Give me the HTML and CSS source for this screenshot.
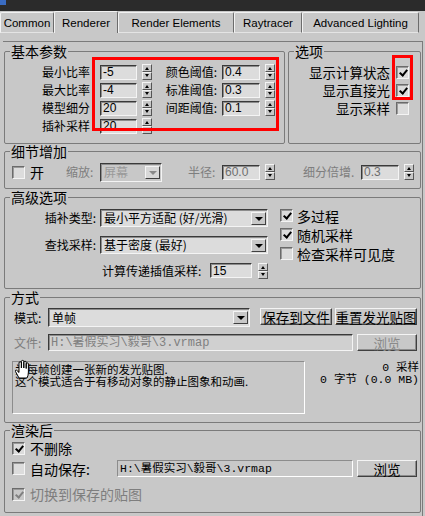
FILE: index.html
```html
<!DOCTYPE html>
<html>
<head>
  <meta charset="utf-8">
  <meta name="viewport" content="width=device-width, initial-scale=1.0">
  <title>Render Setup - 发光贴图</title>
  <link rel="stylesheet" href="styles.css">
</head>
<body>

  <div class="topbar"><span class="app-icon"></span></div>

  <!-- Tabs -->
  <div class="tabs">
    <div class="tab tab-common">Common</div>
    <div class="tab tab-renderer active">Renderer</div>
    <div class="tab tab-elements">Render Elements</div>
    <div class="tab tab-raytracer">Raytracer</div>
    <div class="tab tab-lighting">Advanced Lighting</div>
  </div>

  <div class="panel">

    <!-- 基本参数 / 选项 -->
    <div class="group-row">
      <fieldset class="group basic">
        <legend>基本参数</legend>
        <div class="basic-grid">
          <span class="lbl">最小比率</span>
          <span class="field">-5</span>
          <span class="spin"><b></b><b></b></span>
          <span class="lbl">颜色阈值:</span>
          <span class="field">0.4</span>
          <span class="spin"><b></b><b></b></span>

          <span class="lbl">最大比率</span>
          <span class="field">-4</span>
          <span class="spin"><b></b><b></b></span>
          <span class="lbl">标准阈值:</span>
          <span class="field">0.3</span>
          <span class="spin"><b></b><b></b></span>

          <span class="lbl">模型细分</span>
          <span class="field">20</span>
          <span class="spin"><b></b><b></b></span>
          <span class="lbl">间距阈值:</span>
          <span class="field">0.1</span>
          <span class="spin"><b></b><b></b></span>

          <span class="lbl">插补采样</span>
          <span class="field">20</span>
          <span class="spin"><b></b><b></b></span>
        </div>
      </fieldset>

      <fieldset class="group options">
        <legend>选项</legend>
        <div class="opt-list">
          <div class="opt-row"><span>显示计算状态</span><span class="chk on"></span></div>
          <div class="opt-row"><span>显示直接光</span><span class="chk on"></span></div>
          <div class="opt-row"><span>显示采样</span><span class="chk"></span></div>
        </div>
      </fieldset>
    </div>

    <!-- 细节增加 -->
    <fieldset class="group detail">
      <legend>细节增加</legend>
      <div class="detail-row">
        <span class="chk"></span>
        <span class="big detail-on">开</span>
        <span class="dim detail-zoom">缩放:</span>
        <span class="combo combo-screen disabled"><span class="combo-text">屏幕</span><span class="combo-btn"></span></span>
        <span class="dim detail-radius">半径:</span>
        <span class="field field-radius dim-text">60.0</span>
        <span class="spin"><b></b><b></b></span>
        <span class="dim detail-mult">细分倍增.</span>
        <span class="field field-mult dim-text">0.3</span>
        <span class="spin"><b></b><b></b></span>
      </div>
    </fieldset>

    <!-- 高级选项 -->
    <fieldset class="group advanced">
      <legend>高级选项</legend>
      <div class="adv-body">
        <div class="adv-left">
          <div class="adv-row">
            <span class="adv-lbl">插补类型:</span>
            <span class="combo combo-wide"><span class="combo-text">最小平方适配 (好/光滑)</span><span class="combo-btn"></span></span>
          </div>
          <div class="adv-row adv-row2">
            <span class="adv-lbl">查找采样:</span>
            <span class="combo combo-wide"><span class="combo-text">基于密度 (最好)</span><span class="combo-btn"></span></span>
          </div>
          <div class="adv-row adv-row3">
            <span class="adv-lbl3">计算传递插值采样:</span>
            <span class="field field-interp">15</span>
            <span class="spin"><b></b><b></b></span>
          </div>
        </div>
        <div class="adv-right">
          <div class="check-row"><span class="chk on"></span><span class="big">多过程</span></div>
          <div class="check-row"><span class="chk on"></span><span class="big">随机采样</span></div>
          <div class="check-row"><span class="chk"></span><span class="big">检查采样可见度</span></div>
        </div>
      </div>
    </fieldset>

    <!-- 方式 -->
    <fieldset class="group mode">
      <legend>方式</legend>
      <div class="mode-row">
        <span class="mode-lbl">模式:</span>
        <span class="combo combo-mode"><span class="combo-text">单帧</span><span class="combo-btn"></span></span>
        <span class="btn btn-save">保存到文件</span>
        <span class="btn btn-reset">重置发光贴图</span>
      </div>
      <div class="mode-row file-row">
        <span class="mode-lbl dim">文件:</span>
        <span class="path-field disabled">H:\暑假实习\毅哥\3.vrmap</span>
        <span class="btn btn-browse disabled">浏览</span>
      </div>
      <div class="mode-row info-row">
        <div class="info-box">
          <div>为每帧创建一张新的发光贴图.</div>
          <div>这个模式适合于有移动对象的静止图象和动画.</div>
          <svg class="cursor" width="20" height="20" viewBox="0 0 20 20">
            <path d="M6 19 L2.5 12.5 Q2 10.8 3.6 11.2 L6 13.5 V4 Q6 2.7 7.2 2.7 Q8.4 2.7 8.4 4 V9 V2.6 Q8.4 1.4 9.6 1.4 Q10.8 1.4 10.8 2.6 V9 V3.4 Q10.8 2.2 12 2.2 Q13.2 2.2 13.2 3.4 V9.5 V5 Q13.2 3.9 14.3 3.9 Q15.4 3.9 15.4 5 V13 Q15.4 16.5 14 19 Z" fill="#fff" stroke="#000" stroke-width="1"/>
          </svg>
        </div>
        <div class="info-stats">
          <div>0 采样</div>
          <div>0 字节 (0.0 MB)</div>
        </div>
      </div>
    </fieldset>

    <!-- 渲染后 -->
    <fieldset class="group after">
      <legend>渲染后</legend>
      <div class="after-row">
        <span class="chk on"></span>
        <span class="big after-lbl">不删除</span>
      </div>
      <div class="after-row autosave-row">
        <span class="chk"></span>
        <span class="big after-lbl autosave-lbl">自动保存:</span>
        <span class="path-field autosave-field">H:\暑假实习\毅哥\3.vrmap</span>
        <span class="btn btn-browse">浏览</span>
      </div>
      <div class="after-row switch-row">
        <span class="chk on disabled"></span>
        <span class="big after-lbl dim">切换到保存的贴图</span>
      </div>
    </fieldset>

  </div>

  <!-- red annotation boxes -->
  <div class="mark mark-basic"></div>
  <div class="mark mark-options"></div>

</body>
</html>
```

FILE: styles.css
```css
* {
  box-sizing: border-box;
  margin: 0;
  padding: 0;
}

body {
  width: 425px;
  height: 516px;
  overflow: hidden;
  position: relative;
  background: #c8c8c8;
  color: #000;
  font-family: "Noto Sans CJK SC", "Liberation Sans", sans-serif;
  font-size: 12px;
  line-height: 14px;
}

.topbar {
  height: 11px;
  background: #2b2b2b;
  display: flex;
}

.app-icon {
  width: 6px;
  height: 5px;
  background: #3a6cc2;
}

/* Tabs */
.tabs {
  display: flex;
  align-items: flex-end;
  height: 22px;
}

.tab {
  height: 21px;
  display: flex;
  align-items: center;
  justify-content: center;
  border: 1px solid;
  border-color: #f2f2f2 #6c6c6c #e4e4e4 #f2f2f2;
  border-radius: 2px 2px 0 0;
  font-family: "Liberation Sans", Arial, sans-serif;
  font-size: 11.5px;
}

.tab.active {
  height: 22px;
  border-bottom: none;
}

.tab-common { width: 54px; }
.tab-renderer { width: 64px; }
.tab-elements { width: 116px; }
.tab-raytracer { width: 68px; }
.tab-lighting { width: 117px; }

/* Rollout panel */
.panel {
  margin: 8px 0 0 3px;
  width: 420px;
  height: 475px;
  border-top: 1px solid #7b7b7b;
  border-right: 1px solid #7b7b7b;
  padding: 1px 0 0 1px;
}

.group {
  border: 1px solid #7b7b7b;
  border-radius: 2px;
  min-inline-size: 0;
  width: 417px;
}

.group legend {
  margin-left: 5px;
  padding: 0 1px;
  font-size: 14px;
  line-height: 14px;
}

.group-row {
  display: flex;
  gap: 3px;
  margin-top: 1px;
}

.big {
  font-size: 14px;
}

.dim {
  color: #7e7e7e;
}

/* generic controls */
.field {
  height: 15px;
  display: flex;
  align-items: center;
  padding-left: 2px;
  border: 1px solid;
  border-color: #3a3a3a #f4f4f4 #f4f4f4 #3a3a3a;
  box-shadow: inset 1px 1px #8c8c8c;
  background: #dcdcdc;
  font-family: "Liberation Sans", Arial, sans-serif;
  font-size: 12px;
}

.dim-text {
  color: #6e6e6e;
}

.spin {
  width: 10px;
  height: 16px;
  display: flex;
  flex-direction: column;
}

.spin b {
  flex: 1;
  position: relative;
  border: 1px solid;
  border-color: #f4f4f4 #555 #555 #f4f4f4;
  background: #c8c8c8;
}

.spin b::after {
  content: "";
  position: absolute;
  left: 2px;
  top: 2px;
  border-left: 2px solid transparent;
  border-right: 2px solid transparent;
  border-bottom: 3px solid #000;
}

.spin b:last-child::after {
  top: 1px;
  border-bottom: none;
  border-top: 3px solid #000;
}

.chk {
  flex: none;
  position: relative;
  width: 13px;
  height: 13px;
  border: 1px solid;
  border-color: #6b6b6b #f4f4f4 #f4f4f4 #6b6b6b;
  box-shadow: inset 1px 1px #9a9a9a;
  background: #dcdcdc;
}

.chk.on::after {
  content: "";
  position: absolute;
  left: 4px;
  top: 1px;
  width: 3px;
  height: 6px;
  border: solid #000;
  border-width: 0 2px 2px 0;
  transform: rotate(40deg);
}

.chk.disabled {
  background: #c8c8c8;
}

.chk.disabled::after {
  border-color: #808080;
}

.combo {
  display: flex;
  align-items: center;
  height: 18px;
  padding-left: 3px;
  border: 1px solid;
  border-color: #3a3a3a #f4f4f4 #f4f4f4 #3a3a3a;
  box-shadow: inset 1px 1px #8c8c8c;
  background: #dcdcdc;
}

.combo-text {
  flex: 1;
  white-space: nowrap;
}

.combo-btn {
  position: relative;
  width: 15px;
  height: 13px;
  margin-right: 1px;
  border: 1px solid;
  border-color: #f4f4f4 #404040 #404040 #f4f4f4;
  background: #c8c8c8;
}

.combo-btn::after {
  content: "";
  position: absolute;
  left: 3px;
  top: 4px;
  border-left: 4px solid transparent;
  border-right: 4px solid transparent;
  border-top: 4px solid #000;
}

.combo.disabled {
  background: #c8c8c8;
  color: #9a9a9a;
}

.combo.disabled .combo-btn {
  background: #d8d8d8;
}

.combo.disabled .combo-btn::after {
  border-top-color: #8a8a8a;
}

.btn {
  height: 17px;
  display: flex;
  align-items: center;
  justify-content: center;
  border: 1px solid;
  border-color: #f4f4f4 #404040 #404040 #f4f4f4;
  box-shadow: inset -1px -1px #8c8c8c;
  background: #c8c8c8;
  font-size: 13.5px;
  white-space: nowrap;
}

.btn.disabled {
  color: #8a8a8a;
}

.path-field {
  height: 17px;
  display: flex;
  align-items: center;
  padding-left: 2px;
  border: 1px solid;
  border-color: #8c8c8c #fff #fff #8c8c8c;
  font-family: "Liberation Mono", "Noto Sans CJK SC", monospace;
  font-size: 11.5px;
  white-space: nowrap;
}

.path-field.disabled {
  border-color: #3a3a3a #f4f4f4 #f4f4f4 #3a3a3a;
  box-shadow: inset 1px 1px #8c8c8c;
  background: #d0d0d0;
  color: #808080;
  font-size: 12px;
}

/* 基本参数 */
.group.basic {
  width: 281px;
  flex: none;
}

.basic-grid {
  display: grid;
  grid-template-columns: 90px 37px 10px 60px 38px 10px;
  grid-auto-rows: 18px;
  column-gap: 5px;
  align-items: center;
  padding: 5px 0 8px;
}

.lbl {
  text-align: right;
  white-space: nowrap;
}

.basic-grid .lbl:nth-child(6n+1) {
  padding-right: 5px;
}

/* 选项 */
.group.options {
  width: 133px;
  flex: none;
}

.opt-list {
  padding: 5px 11px 0 0;
}

.opt-row {
  height: 18px;
  display: flex;
  align-items: center;
  justify-content: flex-end;
  gap: 6px;
  font-size: 13.5px;
}

/* 细节增加 */
.detail-row {
  height: 18px;
  display: flex;
  align-items: center;
  margin: 5px 0 7px 7px;
}

.detail-on { margin-left: 5px; width: 14px; }
.detail-zoom { margin-left: 22px; width: 30px; }
.combo-screen { margin-left: 4px; width: 62px; height: 19px; }
.detail-radius { margin-left: 26px; width: 30px; }
.field-radius { margin-left: 4px; width: 38px; }
.detail-mult { margin-left: 28px; width: 54px; }
.field-mult { margin-left: 4px; width: 38px; }
.detail-row .spin { margin-left: 5px; }

/* 高级选项 */
.group.advanced {
  margin-top: 1px;
}

.adv-body {
  display: flex;
  align-items: flex-start;
  padding-bottom: 9px;
}

.adv-left {
  padding-top: 5px;
}

.adv-row {
  display: flex;
  align-items: center;
  height: 18px;
}

.adv-row2 { margin-top: 9px; }
.adv-row3 { margin-top: 8px; height: 17px; }

.adv-lbl {
  width: 91px;
  margin-right: 4px;
  text-align: right;
}

.combo-wide {
  width: 168px;
}

.adv-lbl3 {
  margin-left: 97px;
  width: 108px;
}

.field-interp {
  width: 42px;
  margin-right: 6px;
}

.adv-right {
  margin-left: 12px;
  padding-top: 2px;
}

.check-row {
  height: 19px;
  display: flex;
  align-items: center;
  gap: 4px;
}

/* 方式 */
.group.mode {
  margin-top: 1px;
}

.mode-row {
  display: flex;
  align-items: flex-start;
  margin-top: 4px;
}

.mode-lbl {
  margin-left: 9px;
  width: 34px;
  height: 19px;
  line-height: 19px;
}

.combo-mode {
  width: 202px;
  height: 19px;
}

.btn-save { margin-left: 10px; width: 72px; }
.btn-reset { margin-left: 3px; width: 82px; }

.file-row {
  margin-top: 7px;
}

.file-row .mode-lbl {
  height: 17px;
  line-height: 17px;
}

.file-row .path-field {
  width: 305px;
}

.btn-browse {
  margin-left: 4px;
  width: 60px;
}

.info-row {
  margin-top: 10px;
  margin-bottom: 8px;
}

.info-box {
  position: relative;
  margin-left: 7px;
  width: 293px;
  height: 53px;
  padding: 1px 2px;
  border: 1px solid;
  border-color: #8c8c8c #fff #fff #8c8c8c;
  font-size: 11.5px;
  line-height: 12px;
  white-space: nowrap;
}

.cursor {
  position: absolute;
  left: 0;
  top: -3px;
}

.info-stats {
  flex: 1;
  padding: 1px 1px 0 0;
  text-align: right;
  font-size: 11.5px;
  line-height: 12px;
  font-family: "Liberation Mono", "Noto Sans CJK SC", monospace;
}

/* 渲染后 */
.after-row {
  display: flex;
  align-items: center;
  height: 16px;
  margin: 3px 0 0 7px;
}

.after-lbl {
  margin-left: 5px;
}

.autosave-row {
  margin-top: 4px;
  height: 17px;
}

.autosave-lbl {
  width: 87px;
}

.autosave-field {
  width: 236px;
}

.switch-row {
  margin-top: 9px;
  margin-bottom: 10px;
}

/* red annotations */
.mark {
  position: absolute;
  border: 3px solid #f00;
}

.mark-basic {
  left: 92px;
  top: 57px;
  width: 187px;
  height: 74px;
}

.mark-options {
  left: 392px;
  top: 55px;
  width: 21px;
  height: 45px;
}
```
